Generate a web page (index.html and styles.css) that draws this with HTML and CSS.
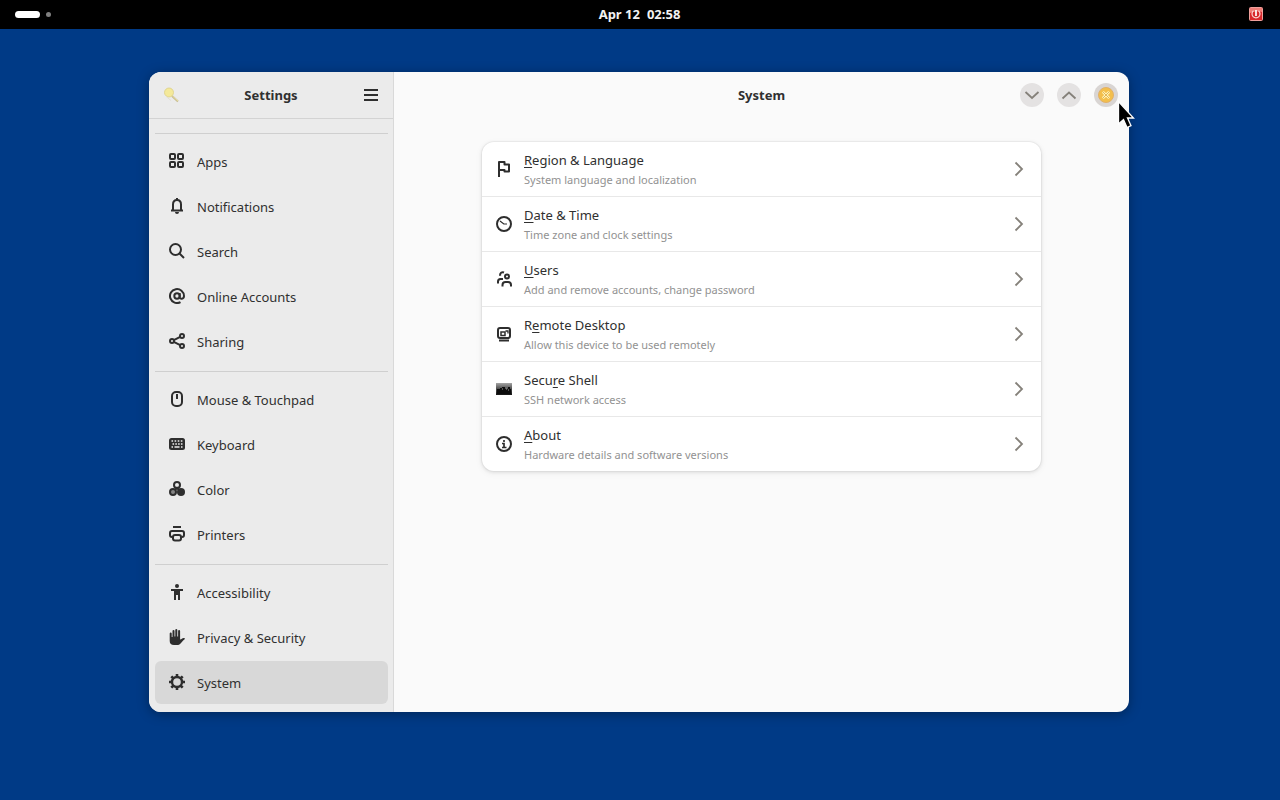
FILE: index.html
```html
<!DOCTYPE html>
<html lang="en">
<head>
  <meta charset="UTF-8">
  <meta name="viewport" content="width=device-width, initial-scale=1.0">
  <title>Settings</title>
  <link rel="stylesheet" href="styles.css">
</head>
<body>
  <svg class="sprite" width="0" height="0" aria-hidden="true">
    <symbol id="chevron" viewBox="0 0 16 16">
      <path d="M4.500 1.500L11 8L4.500 14.500" fill="none" stroke="#85817a" stroke-width="1.8"/>
    </symbol>
  </svg>

  <header class="topbar">
    <div class="workspaces">
      <span class="workspace active"></span>
      <span class="workspace"></span>
    </div>
    <button class="clock"><span>Apr 12</span><span>02:58</span></button>
    <button class="power" aria-label="System menu">
      <svg class="icon" viewBox="0 0 16 16">
        <rect x="1.5" y="1.5" width="13" height="13" rx="1" fill="#d8282c" stroke="#f0a09c"/>
        <path d="M2 2h12v4Q8 4 2 7z" fill="#ee7d77"/>
        <path d="M5.500 4.800a4 4 0 1 0 5 0" fill="none" stroke="#f9d5d2" stroke-width="1.200"/>
        <path d="M8 4v6" stroke="#fff" stroke-width="1.700"/>
      </svg>
    </button>
  </header>

  <main class="desktop">
    <div class="window">
      <aside class="sidebar">
        <div class="headerbar sidebar-header">
          <button class="header-button" aria-label="Search">
            <svg class="icon" viewBox="0 0 16 16">
              <path d="M9 9l6 5.500" stroke="#c8bd91" stroke-width="2"/>
              <path d="M9.500 9l5.500 5" stroke="#efe6a8" stroke-width=".8"/>
              <circle cx="6" cy="5.500" r="4.500" fill="#f4e99a" stroke="#dccf85" stroke-width=".8"/>
              <path d="M3.200 9.500L8 13.500" stroke="#e3e0d2" stroke-width="1"/>
            </svg>
          </button>
          <h1 class="title">Settings</h1>
          <button class="header-button" aria-label="Main menu">
            <svg class="icon" viewBox="0 0 16 16">
              <path d="M1 3h14M1 8h14M1 13h14" stroke="#2e2e2e" stroke-width="2"/>
            </svg>
          </button>
        </div>

        <nav class="nav">
          <div class="nav-group">
            <a class="nav-item" href="#">
              <svg class="icon line" viewBox="0 0 16 16">
                <rect x="1" y="1" width="5" height="5" rx="1"/><rect x="9" y="1" width="5" height="5" rx="1"/>
                <rect x="1" y="9" width="5" height="5" rx="1"/><rect x="9" y="9" width="5" height="5" rx="1"/>
              </svg>
              <span>Apps</span>
            </a>
            <a class="nav-item" href="#">
              <svg class="icon line" viewBox="0 0 16 16">
                <path d="M2 12.500h12M4 12V6.500C4 3.500 5.500 2 8 2s4 1.500 4 4.500V12"/>
                <path d="M8 0v2"/>
                <path class="solid" d="M6 14h4a2 2 0 0 1-4 0z"/>
              </svg>
              <span>Notifications</span>
            </a>
            <a class="nav-item" href="#">
              <svg class="icon line" viewBox="0 0 16 16">
                <circle cx="6.500" cy="6.500" r="5.500"/><path d="M10.500 10.500l4.500 4.500"/>
              </svg>
              <span>Search</span>
            </a>
            <a class="nav-item" href="#">
              <svg class="icon line" viewBox="0 0 16 16">
                <circle cx="8" cy="8" r="2.700"/>
                <path d="M10.700 5v4.300c0 2.200 4.300 2.200 4.300-1.300a7 7 0 1 0-3.500 6.100"/>
              </svg>
              <span>Online Accounts</span>
            </a>
            <a class="nav-item" href="#">
              <svg class="icon line" viewBox="0 0 16 16">
                <path d="M11.200 3.900L4.800 7.100M4.800 8.900l6.400 3.200"/>
                <circle cx="13" cy="3" r="2"/><circle cx="3" cy="8" r="2"/><circle cx="13" cy="13" r="2"/>
              </svg>
              <span>Sharing</span>
            </a>
          </div>

          <div class="nav-group">
            <a class="nav-item" href="#">
              <svg class="icon line" viewBox="0 0 16 16">
                <rect x="3" y="1" width="10" height="14" rx="4"/><path d="M8 3v5"/>
              </svg>
              <span>Mouse &amp; Touchpad</span>
            </a>
            <a class="nav-item" href="#">
              <svg class="icon" viewBox="0 0 16 16">
                <rect x="0" y="2" width="16" height="12" rx="2.500" fill="#2e2e2e"/>
                <path d="M2.500 5h11" stroke="#ebebeb" stroke-width="1.500" stroke-dasharray="1.600 1.500"/>
                <path d="M3.500 8h10" stroke="#ebebeb" stroke-width="1.500" stroke-dasharray="1.600 1.200"/>
                <path d="M2.500 11h1.500M5.500 11h5M12 11h1.500" stroke="#ebebeb" stroke-width="1.500"/>
              </svg>
              <span>Keyboard</span>
            </a>
            <a class="nav-item" href="#">
              <svg class="icon line" viewBox="0 0 16 16">
                <circle cx="8" cy="4" r="3"/>
                <circle cx="4" cy="11" r="3" fill="#858585"/>
                <circle class="solid" cx="12" cy="11" r="4"/>
                <path d="M6.500 8.500L8 7l1.500 1.500"/>
              </svg>
              <span>Color</span>
            </a>
            <a class="nav-item" href="#">
              <svg class="icon line" viewBox="0 0 16 16">
                <path d="M4 1h8M3.500 11H3a2 2 0 0 1-2-2V7a2 2 0 0 1 2-2h10a2 2 0 0 1 2 2v2a2 2 0 0 1-2 2h-.500"/>
                <rect x="4" y="9" width="8" height="5.500" rx="2"/>
              </svg>
              <span>Printers</span>
            </a>
          </div>

          <div class="nav-group">
            <a class="nav-item" href="#">
              <svg class="icon" viewBox="0 0 16 16" fill="#2e2e2e">
                <circle cx="8" cy="2" r="2"/>
                <path d="M2 5h12v2h-3v9H9v-5H7v5H5V7H2z"/>
              </svg>
              <span>Accessibility</span>
            </a>
            <a class="nav-item" href="#">
              <svg class="icon" viewBox="0 0 16 16" fill="#2e2e2e">
                <path d="M.7 4.500a1 1 0 0 1 2 0V8h.8V2a1 1 0 0 1 2 0v5.500h.8V1a1 1 0 0 1 2 0v6.500h.8V2a1 1 0 0 1 2 0v8.500c1.500 0 2-1.700 4-1.500 1 .1 1 1 .2 1.400C13 11.800 11.800 16 8 16H5C2.200 16 .7 14.500.7 12z"/>
              </svg>
              <span>Privacy &amp; Security</span>
            </a>
            <a class="nav-item selected" href="#" aria-current="page">
              <svg class="icon line" viewBox="0 0 16 16">
                <circle cx="8" cy="8" r="5" stroke-width="2.400"/>
                <path d="M8 0v3M8 13v3M0 8h3M13 8h3M2.300 2.300l2.200 2.200M11.500 11.500l2.200 2.200M2.300 13.700l2.200-2.200M11.500 4.500l2.200-2.200" stroke-width="2.600"/>
              </svg>
              <span>System</span>
            </a>
          </div>
        </nav>
      </aside>

      <section class="content">
        <div class="headerbar content-header">
          <h2 class="title">System</h2>
          <div class="window-controls">
            <button class="control" aria-label="Minimize">
              <svg class="icon" viewBox="0 0 16 16"><path d="M1.500 5L8 11l6.500-6" fill="none" stroke="#85817a" stroke-width="1.800"/></svg>
            </button>
            <button class="control" aria-label="Maximize">
              <svg class="icon" viewBox="0 0 16 16"><path d="M1.500 11.500L8 5.500l6.500 6" fill="none" stroke="#85817a" stroke-width="1.800"/></svg>
            </button>
            <button class="control close" aria-label="Close">
              <svg class="icon" viewBox="0 0 16 16">
                <circle cx="8" cy="8" r="7.500" fill="#f3bf4c" stroke="#e0b06a"/>
                <path d="M4.800 4.800l6.400 6.400M11.200 4.800l-6.400 6.400" stroke="#fff3b8" stroke-width="2.600"/>
                <path d="M5 5l6 6M11 5l-6 6" stroke="#d9a640" stroke-width=".8"/>
              </svg>
            </button>
          </div>
        </div>

        <div class="panel">
          <div class="card">
            <a class="row" href="#">
              <svg class="icon line" viewBox="0 0 16 16">
                <path d="M3 16V1h5.500v2.500H13v7H8.500V9H3" stroke-linejoin="round"/>
              </svg>
              <span class="row-text">
                <span class="row-title"><u>R</u>egion &amp; Language</span>
                <span class="row-subtitle">System language and localization</span>
              </span>
              <svg class="icon"><use href="#chevron"/></svg>
            </a>
            <a class="row" href="#">
              <svg class="icon line" viewBox="0 0 16 16">
                <circle cx="8" cy="8" r="7"/><path d="M4 5l3.800 3H11" stroke-width="1.200"/>
              </svg>
              <span class="row-text">
                <span class="row-title"><u>D</u>ate &amp; Time</span>
                <span class="row-subtitle">Time zone and clock settings</span>
              </span>
              <svg class="icon"><use href="#chevron"/></svg>
            </a>
            <a class="row" href="#">
              <svg class="icon line" viewBox="0 0 16 16">
                <circle cx="11" cy="5.500" r="2"/>
                <path d="M6.500 15.500V14a3 3 0 0 1 3-3h2.500a3 3 0 0 1 3 3v1.500"/>
                <path d="M8 1.500C6 .700 3.500 2 4.300 4.800M2 12.500V10.500a2.500 2.500 0 0 1 2.500-2.500H7"/>
              </svg>
              <span class="row-text">
                <span class="row-title"><u>U</u>sers</span>
                <span class="row-subtitle">Add and remove accounts, change password</span>
              </span>
              <svg class="icon"><use href="#chevron"/></svg>
            </a>
            <a class="row" href="#">
              <svg class="icon line" viewBox="0 0 16 16">
                <rect x="2" y="2" width="12" height="10" rx="2"/>
                <path d="M3 14.500h10"/>
                <rect x="5" y="6" width="4" height="3.500" stroke-width="1.500"/>
                <path d="M9.500 5H12v2.500" stroke-width="1.300"/>
              </svg>
              <span class="row-text">
                <span class="row-title">R<u>e</u>mote Desktop</span>
                <span class="row-subtitle">Allow this device to be used remotely</span>
              </span>
              <svg class="icon"><use href="#chevron"/></svg>
            </a>
            <a class="row" href="#">
              <svg class="icon" viewBox="0 0 16 16">
                <defs>
                  <linearGradient id="screen" x1="0" y1="0" x2="0" y2="1">
                    <stop offset="0" stop-color="#a5a5a5"/>
                    <stop offset=".5" stop-color="#4c4c4c"/>
                    <stop offset="1" stop-color="#161616"/>
                  </linearGradient>
                </defs>
                <rect x="0" y="2" width="16" height="12" fill="url(#screen)"/>
                <path d="M1 8h3v-1h2V6h3v2h3V6h2v2h1v5H1z" fill="#0c0c0c"/>
                <path d="M6 8h1M10 8h1M12 9h1" stroke="#999"/>
              </svg>
              <span class="row-text">
                <span class="row-title">Secu<u>r</u>e Shell</span>
                <span class="row-subtitle">SSH network access</span>
              </span>
              <svg class="icon"><use href="#chevron"/></svg>
            </a>
            <a class="row" href="#">
              <svg class="icon line" viewBox="0 0 16 16">
                <circle cx="8" cy="8" r="7"/>
                <path d="M8 4v2M6 7.500h2V11M6 11.500h4.500" stroke-width="1.700"/>
              </svg>
              <span class="row-text">
                <span class="row-title"><u>A</u>bout</span>
                <span class="row-subtitle">Hardware details and software versions</span>
              </span>
              <svg class="icon"><use href="#chevron"/></svg>
            </a>
          </div>
        </div>
      </section>
    </div>

    <svg class="pointer" viewBox="0 0 18 30" aria-hidden="true">
      <path d="M1.500 1.500V24l5-4.500 3.500 8 4-1.800-3.500-7.700h6z" fill="#000" stroke="#fff" stroke-width="1.300"/>
    </svg>
  </main>
</body>
</html>
```
FILE: styles.css
```css
* {
  box-sizing: border-box;
}
body {
  margin: 0;
  min-height: 100vh;
  display: flex;
  flex-direction: column;
  background-color: #003a86;
  color: #303030;
  font-family: "Noto Sans", sans-serif;
  font-size: 13px;
  line-height: 18px;
}
button {
  padding: 0;
  border: none;
  background: none;
  color: inherit;
  font: inherit;
  display: flex;
  align-items: center;
  justify-content: center;
}
a {
  color: inherit;
  text-decoration: none;
}
.sprite {
  position: absolute;
}
.icon {
  width: 16px;
  height: 16px;
  flex: none;
}
.line {
  fill: none;
  stroke: #2e2e2e;
  stroke-width: 2;
}
.line .solid {
  fill: #2e2e2e;
  stroke: none;
}

/* top bar */
.topbar {
  display: grid;
  grid-template-columns: 1fr auto 1fr;
  align-items: center;
  height: 29px;
  padding: 0 16px 1px 15px;
  background-color: #000;
  color: #f2f2f2;
}
.workspaces {
  display: flex;
  align-items: center;
  gap: 6px;
}
.workspace {
  width: 5px;
  height: 5px;
  border-radius: 3px;
  background-color: #808080;
}
.workspace.active {
  width: 25px;
  height: 7px;
  border-radius: 4px;
  background-color: #fff;
}
.clock {
  gap: 7px;
  font-size: 13px;
  font-weight: bold;
}
.power {
  justify-self: end;
}

/* window */
.desktop {
  position: relative;
  flex: 1;
}
.window {
  position: absolute;
  top: 43px;
  left: 149px;
  right: 151px;
  bottom: 88px;
  display: flex;
  border-radius: 12px;
  overflow: hidden;
  background-color: #fafafa;
  box-shadow: 0 2px 12px rgba(0, 0, 0, 0.35);
}
.headerbar {
  height: 47px;
  display: flex;
  align-items: center;
  flex: none;
}
.title {
  margin: 0;
  flex: 1;
  text-align: center;
  font-size: 13px;
  font-weight: bold;
}

/* sidebar */
.sidebar {
  width: 245px;
  flex: none;
  display: flex;
  flex-direction: column;
  background-color: #ebebeb;
  border-right: 1px solid #d9d9d9;
}
.sidebar-header {
  padding: 0 6px;
  border-bottom: 1px solid #d3d3d3;
}
.header-button {
  width: 32px;
  height: 32px;
}
.nav {
  flex: 1;
  padding: 14px 5px 8px 6px;
}
.nav-group {
  display: flex;
  flex-direction: column;
  gap: 2px;
  padding: 6px 0 8px;
  border-top: 1px solid #cfcfcf;
}
.nav-item {
  display: flex;
  align-items: center;
  gap: 12px;
  height: 43px;
  padding: 0 14px;
  border-radius: 6px;
}
.nav-item .icon {
  margin-bottom: 2px;
}
.nav-item:hover {
  background-color: #e2e2e2;
}
.nav-item.selected {
  background-color: #d8d8d8;
}

/* content */
.content {
  flex: 1;
  display: flex;
  flex-direction: column;
}
.content-header {
  display: grid;
  grid-template-columns: 1fr auto 1fr;
  height: 46px;
  padding: 0 11px;
}
.content-header .title {
  grid-column: 2;
}
.window-controls {
  display: flex;
  justify-content: flex-end;
  gap: 13px;
}
.control {
  width: 24px;
  height: 24px;
  border-radius: 50%;
  background-color: #e4e2e2;
}
.control.close {
  background-color: #d9d5d3;
}
.panel {
  padding: 24px;
}
.card {
  max-width: 559px;
  margin: 0 auto;
  border-radius: 12px;
  background-color: #fff;
  box-shadow: 0 0 0 1px rgba(0, 0, 0, 0.03), 0 1px 3px 1px rgba(0, 0, 0, 0.07), 0 2px 6px 2px rgba(0, 0, 0, 0.03);
}
.row {
  display: flex;
  align-items: center;
  gap: 12px;
  height: 55px;
  padding: 0 14px;
  border-bottom: 1px solid #e8e8e8;
}
.row:last-child {
  height: 54px;
  border-bottom: none;
}
.row-text {
  flex: 1;
  display: flex;
  flex-direction: column;
  gap: 3px;
}
.row-title u {
  text-underline-offset: 2px;
}
.row-subtitle {
  color: #929292;
  font-size: 11px;
  line-height: 16px;
}

.pointer {
  position: absolute;
  top: 71px;
  left: 1117px;
  width: 18px;
  height: 30px;
}
```
